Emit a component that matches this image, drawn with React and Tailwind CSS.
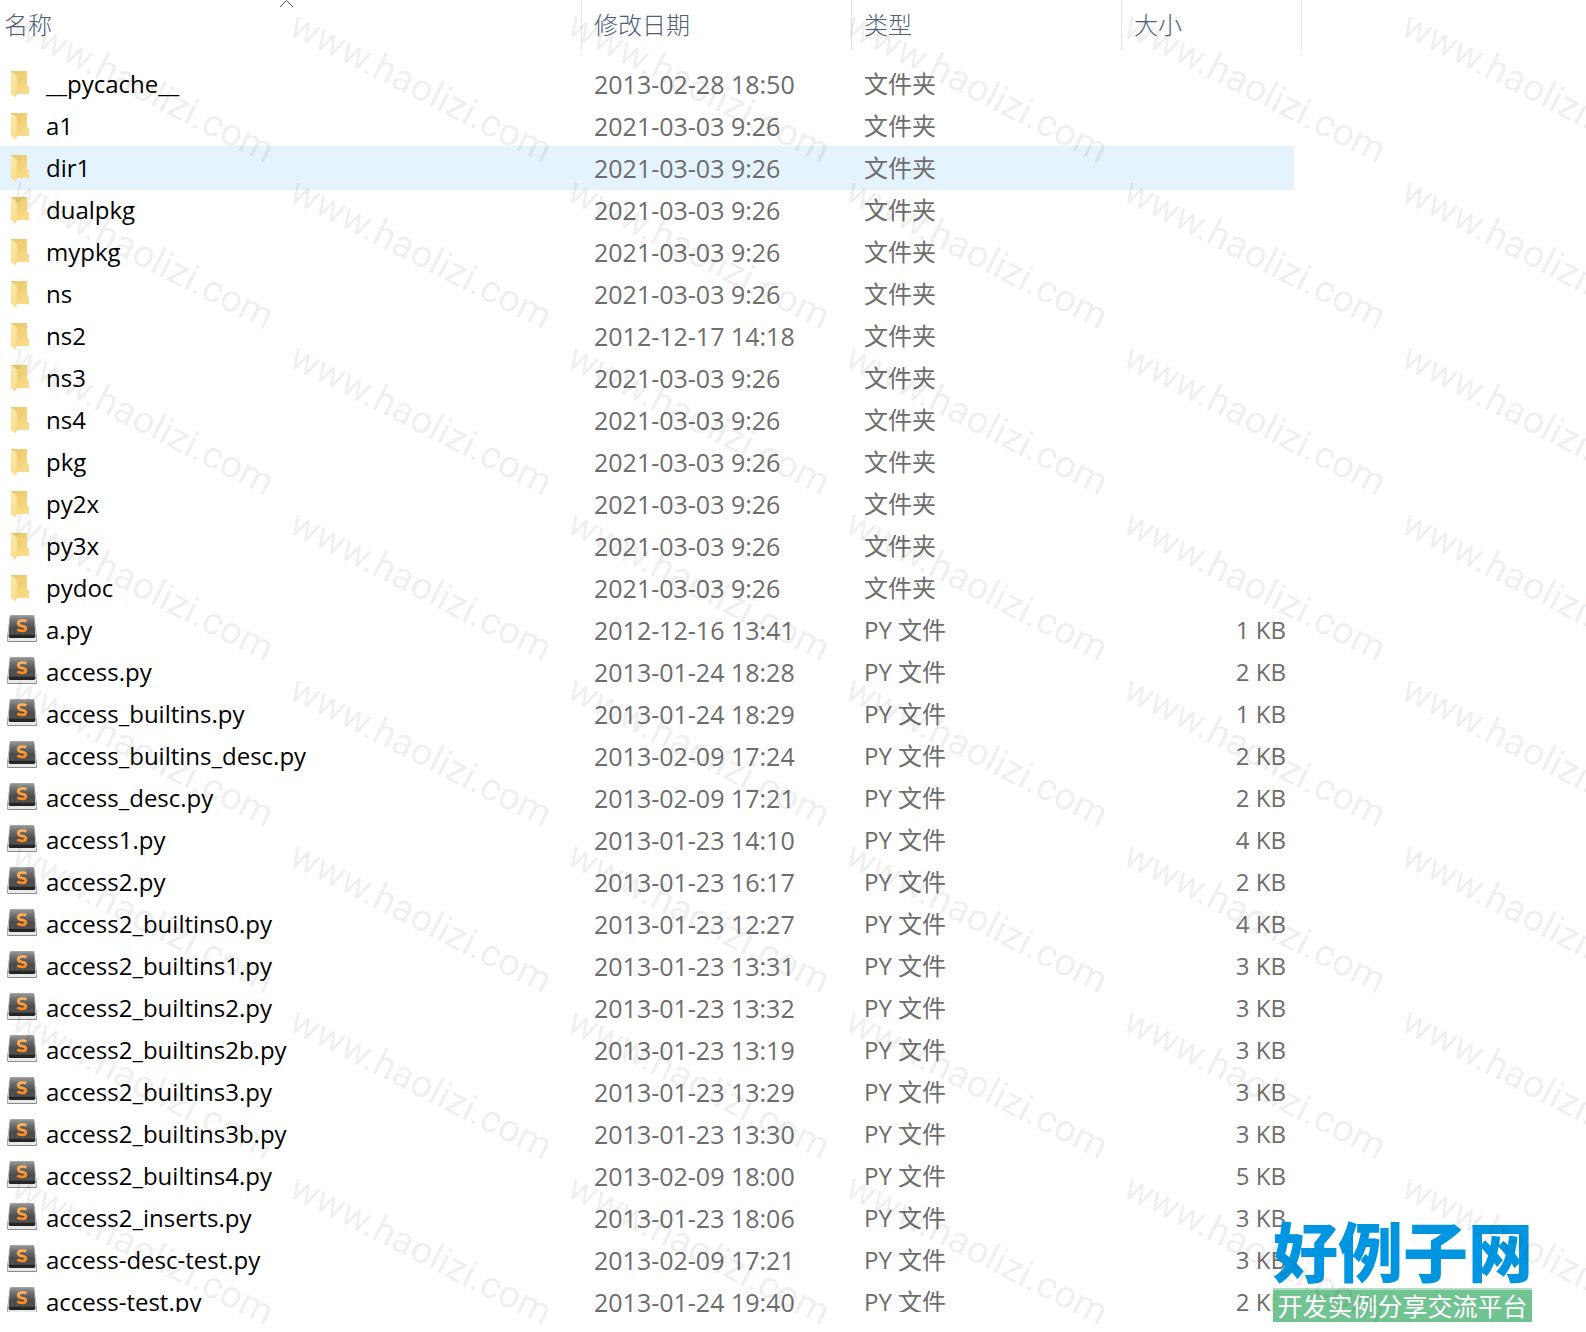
const FOLDERS = [
    ['__pycache__', '2013-02-28 18:50'],
    ['a1', '2021-03-03 9:26'],
    ['dir1', '2021-03-03 9:26'],
    ['dualpkg', '2021-03-03 9:26'],
    ['mypkg', '2021-03-03 9:26'],
    ['ns', '2021-03-03 9:26'],
    ['ns2', '2012-12-17 14:18'],
    ['ns3', '2021-03-03 9:26'],
    ['ns4', '2021-03-03 9:26'],
    ['pkg', '2021-03-03 9:26'],
    ['py2x', '2021-03-03 9:26'],
    ['py3x', '2021-03-03 9:26'],
    ['pydoc', '2021-03-03 9:26'],
];

const FILES = [
    ['a.py', '2012-12-16 13:41', '1 KB'],
    ['access.py', '2013-01-24 18:28', '2 KB'],
    ['access_builtins.py', '2013-01-24 18:29', '1 KB'],
    ['access_builtins_desc.py', '2013-02-09 17:24', '2 KB'],
    ['access_desc.py', '2013-02-09 17:21', '2 KB'],
    ['access1.py', '2013-01-23 14:10', '4 KB'],
    ['access2.py', '2013-01-23 16:17', '2 KB'],
    ['access2_builtins0.py', '2013-01-23 12:27', '4 KB'],
    ['access2_builtins1.py', '2013-01-23 13:31', '3 KB'],
    ['access2_builtins2.py', '2013-01-23 13:32', '3 KB'],
    ['access2_builtins2b.py', '2013-01-23 13:19', '3 KB'],
    ['access2_builtins3.py', '2013-01-23 13:29', '3 KB'],
    ['access2_builtins3b.py', '2013-01-23 13:30', '3 KB'],
    ['access2_builtins4.py', '2013-02-09 18:00', '5 KB'],
    ['access2_inserts.py', '2013-01-23 18:06', '3 KB'],
    ['access-desc-test.py', '2013-02-09 17:21', '3 KB'],
    ['access-test.py', '2013-01-24 19:40', '2 KB'],
];

const ROWS = [
    ...FOLDERS.map(([name, date]) => ({ name, date, type: '文件夹', size: '', folder: true })),
    ...FILES.map(([name, date, size]) => ({ name, date, type: 'PY 文件', size, folder: false })),
];

const SELECTED = 'dir1';

function FolderIcon() {
    return (
        <svg className="h-8 w-8" viewBox="0 0 32 32" aria-hidden="true">
            <path d="M4 3h16v14l2 2v7H4z" fill="url(#folder-back)" />
            <path d="M22 25.500l2 .7-2 .3z" fill="#d9d9d9" />
            <path d="M4 3.500l5 3.500q.8.600.8 1.500v18.500l-1 2.500L4 26z" fill="url(#folder-front)" />
        </svg>
    );
}

function SublimeIcon() {
    return (
        <svg className="h-8 w-8" viewBox="0 0 32 32" aria-hidden="true">
            <path d="M3 1.500h24l3 22v3q0 1.500-1.500 1.500h-27Q0 28 0 26.500v-3z" fill="#8b8b8b" />
            <path d="M3 3h24l2.300 20.500v2.500q0 1-1 1H1.700q-1 0-1-1v-2.500z" fill="#e9e9e9" />
            <path d="M4.500 1.200h21q1.500 0 1.700 1.500l1.100 19.300q0 1.700-1.500 1.700H3.200q-1.500 0-1.500-1.700L2.800 2.700q.2-1.500 1.700-1.500z" fill="url(#key-face)" />
            <path d="M1.800 20.800h26.400v1.400q0 1.800-1.500 1.800H3.300q-1.500 0-1.500-1.800z" fill="#262626" />
            <path d="M19.300 7.500C17 6 11.200 6 11.200 9.400c0 3.600 7.700 1.900 7.700 5 0 3.200-6 2.900-8.600 1.200" fill="none" stroke="url(#key-letter)" strokeWidth="2.700" />
        </svg>
    );
}

function IconGradients() {
    return (
        <svg className="absolute h-0 w-0" aria-hidden="true">
            <defs>
                <linearGradient id="folder-back" x1="0" y1="0" x2="0.6" y2="1">
                    <stop offset="0" stopColor="#eac86c" />
                    <stop offset="0.5" stopColor="#f0cf76" />
                    <stop offset="1" stopColor="#fbdb88" />
                </linearGradient>
                <linearGradient id="folder-front" x1="0" y1="0" x2="0" y2="1">
                    <stop offset="0" stopColor="#ffe9ab" />
                    <stop offset="1" stopColor="#fbdc8c" />
                </linearGradient>
                <linearGradient id="key-face" x1="0" y1="0" x2="0" y2="1">
                    <stop offset="0" stopColor="#9a9a9a" />
                    <stop offset="0.3" stopColor="#6a6a6a" />
                    <stop offset="0.6" stopColor="#4c4c4c" />
                    <stop offset="1" stopColor="#545454" />
                </linearGradient>
                <linearGradient id="key-letter" x1="0" y1="0" x2="0" y2="1">
                    <stop offset="0" stopColor="#ffb35c" />
                    <stop offset="1" stopColor="#ff8a1e" />
                </linearGradient>
            </defs>
        </svg>
    );
}

function Watermark() {
    return (
        <div className="pointer-events-none absolute inset-0 overflow-hidden" aria-hidden="true">
            <div className="grid grid-cols-[repeat(6,278px)] auto-rows-[166px]">
                {Array.from({ length: 48 }, (_, i) => (
                    <span
                        key={i}
                        className="origin-top-left translate-x-6 translate-y-1 rotate-27 font-[Roboto,sans-serif] text-[38px] leading-10 whitespace-nowrap text-black/7"
                    >
                        www.haolizi.com
                    </span>
                ))}
            </div>
        </div>
    );
}

function SiteLogo() {
    return (
        <div className="absolute top-[1216px] left-[1273px] w-[259px] text-center whitespace-nowrap">
            <p className="text-[65px] leading-[72px] font-black text-[#0095e0]">好例子网</p>
            <p className="border-t-2 border-[#b5dfc5] bg-[#72c392] text-[25px] leading-8 text-white">
                开发实例分享交流平台
            </p>
        </div>
    );
}

export default function App() {
    return (
        <main className="relative min-h-screen overflow-hidden bg-white font-['Open_Sans','Noto_Sans_CJK_SC',sans-serif]">
            <IconGradients />
            <div className="max-h-[1312px] overflow-hidden">
                <table className="w-full table-fixed border-separate border-spacing-0 text-left">
                    <colgroup>
                        <col className="w-[582px]" />
                        <col className="w-[270px]" />
                        <col className="w-[270px]" />
                        <col className="w-[172px]" />
                        <col className="w-[8px]" />
                        <col />
                    </colgroup>
                    <thead className="text-2xl leading-[50px] text-[#4c607a]">
                        <tr>
                            <th className="relative border-r border-[#e2e2e2] pl-1 font-light" aria-sort="ascending">
                                名称
                                <svg
                                    className="absolute top-0 left-[279px] h-2 w-4"
                                    viewBox="0 0 16 8"
                                    fill="none"
                                    stroke="#555"
                                    aria-hidden="true"
                                >
                                    <path d="M1 7l6.500-6.500L14 7" />
                                </svg>
                            </th>
                            <th className="border-r border-[#e2e2e2] pl-3 font-light">修改日期</th>
                            <th className="border-r border-[#e2e2e2] pl-3 font-light">类型</th>
                            <th className="border-r border-[#e2e2e2] pl-3 font-light" colSpan={2}>
                                大小
                            </th>
                            <td />
                        </tr>
                        <tr className="h-[13px]" />
                    </thead>
                    <tbody className="text-2xl leading-[42px] text-[#6d6d6d]">
                        {ROWS.map((row) => {
                            const bg =
                                row.name === SELECTED
                                    ? 'bg-[#e5f3ff] shadow-[0_1px_0_#e5f3ff,0_-1px_0_#e5f3ff]'
                                    : '';
                            return (
                                <tr key={row.name}>
                                    <td className={`p-0 ${bg}`}>
                                        <div className="flex h-[42px] items-center gap-[7px] pl-[7px] text-black">
                                            {row.folder ? <FolderIcon /> : <SublimeIcon />}
                                            <span>{row.name}</span>
                                        </div>
                                    </td>
                                    <td className={`py-0 pl-3 text-[25px] ${bg}`}>{row.date}</td>
                                    <td className={`py-0 pl-3 ${bg}`}>{row.type}</td>
                                    <td className={`py-0 pr-2 text-right ${bg}`}>{row.size}</td>
                                </tr>
                            );
                        })}
                    </tbody>
                </table>
            </div>
            <SiteLogo />
            <Watermark />
        </main>
    );
}
